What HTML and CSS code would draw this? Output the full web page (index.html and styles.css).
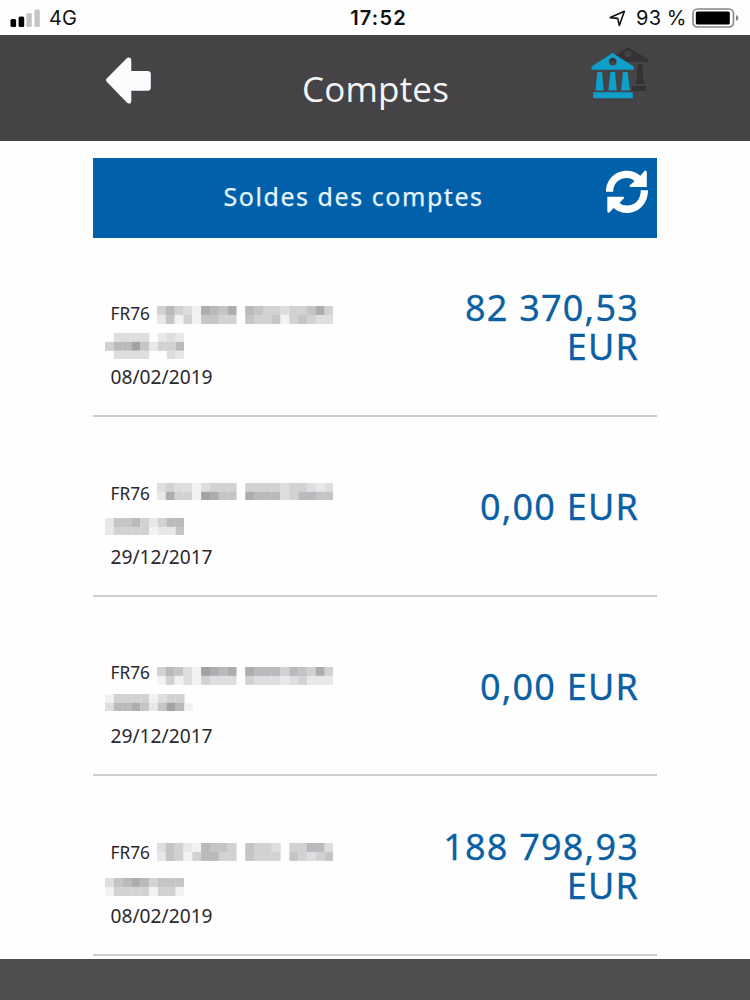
FILE: index.html
```html
<!DOCTYPE html>
<html lang="fr">
<head>
<meta charset="utf-8">
<title>Comptes</title>
<link rel="stylesheet" href="styles.css">
</head>
<body>
<div class="screen">
  <div class="status">
    <div class="status-left">
      <svg class="signal" width="30" height="18" viewBox="0 0 30 18"><rect x="0.5" y="10" width="5.6" height="8" rx="1.6" fill="#000"/><rect x="8.6" y="7.5" width="5.6" height="10.5" rx="1.6" fill="#000"/><rect x="16.4" y="4" width="5.4" height="14" rx="1.6" fill="#c5c4c6"/><rect x="24.4" y="0.5" width="5.4" height="17.5" rx="1.6" fill="#c5c4c6"/></svg>
      <span class="network">4G</span>
    </div>
    <span class="clock">17:52</span>
    <div class="status-right">
      <svg class="location" width="17" height="17" viewBox="0 0 17 17"><path d="M1.2 7.6 15.4 1.3 10.3 15.4 8.7 8.4Z" fill="none" stroke="#111" stroke-width="1.6" stroke-linejoin="round"/></svg>
      <span class="percent">93 %</span>
      <svg class="battery" width="47" height="20" viewBox="0 0 47 20"><rect x="1" y="1" width="40.5" height="18" rx="4.5" fill="#fff" stroke="#858585" stroke-width="1.6"/><rect x="3.8" y="3.6" width="34" height="13" rx="1.5" fill="#000"/><path d="M44 7Q46.5 8.2 46.5 10T44 13Z" fill="#858585"/></svg>
    </div>
  </div>
  <header class="header">
    <svg class="back" width="48" height="48" viewBox="0 0 48 48"><path d="M3 22.2 22.5 2.5Q24.5.7 26.7 2.3 27.3 3.2 27.3 5V15H43.5Q46.8 15 46.8 18V31.5Q46.8 34.8 43.5 34.8H27.3V44.5Q27.3 46.4 26.5 47.2 24.5 48 22.8 46.4L3 26Q1 24 3 22.2Z" fill="#fcfcff"/></svg>
    <h1 class="title">Comptes</h1>
    <svg class="bank" width="58" height="54" viewBox="0 0 58 54">
      <g fill="#343235"><path fill-rule="evenodd" d="M15 14 37 .5 57 12V15H33ZM37 3.4a3.6 3.6 0 1 0 .1 0Z"/><path d="M47 17H51L53 37H45ZM41 39H55V44H41Z"/></g>
      <g fill="#0e9fcb"><path fill-rule="evenodd" d="M.6 19.4 21.6 6 42.8 19.4V22.8H.6ZM21.7 10.8a3.9 3.9 0 1 0 .1 0Z"/><path d="M6.3 25H11L12.8 43.4H4.5ZM19.3 25H24L25.8 43.4H17.5ZM32 25H36.7L39 43.4H30.2ZM2.2 45.2H41.8V51.2H2.2Z"/></g>
    </svg>
  </header>
  <main class="content">
    <div class="banner">
      <h2 class="banner-title">Soldes des comptes</h2>
      <svg class="refresh" width="42" height="43" viewBox="0 0 42 43" fill="#fff"><path d="M0 21.8C0 9.8 8.9 .8 20.8 .8 26 .8 30.5 2.5 34.3 5.8L38.7 .8Q40.5-.2 40.8 2V17H24.4Q23 16.4 24 15.1L28.6 11.2Q25.4 8.1 20.8 8.1C13 8.1 7.2 13.6 7.2 21.8Z"/><path d="M42 20.2C42 33.4 32.7 43 21 43 15.9 43 11.5 41.3 7.7 38L3.4 42.5Q1.6 43.2 1.3 41.2V26.8H17.2Q18.8 27.4 17.7 28.6L13.4 32.9Q16.5 35.6 21 35.6C29 35.6 34.8 29.5 34.8 20.2Z"/></svg>
    </div>
    <ul class="accounts">
      <li class="account">
        <div class="details">
          <div class="line"><span class="iban">FR76</span><svg class="mosaic m8"></svg></div>
          <div class="line second"><svg class="mosaic m3"></svg></div>
          <div class="date">08/02/2019</div>
        </div>
        <div class="amount">82 370,53 EUR</div>
      </li>
      <li class="account">
        <div class="details">
          <div class="line"><span class="iban">FR76</span><svg class="mosaic m5"></svg></div>
          <div class="line second"><svg class="mosaic m9"></svg></div>
          <div class="date">29/12/2017</div>
        </div>
        <div class="amount">0,00 EUR</div>
      </li>
      <li class="account">
        <div class="details">
          <div class="line"><span class="iban">FR76</span><svg class="mosaic m10"></svg></div>
          <div class="line second"><svg class="mosaic m5"></svg></div>
          <div class="date">29/12/2017</div>
        </div>
        <div class="amount">0,00 EUR</div>
      </li>
      <li class="account">
        <div class="details">
          <div class="line"><span class="iban">FR76</span><svg class="mosaic m6"></svg></div>
          <div class="line second"><svg class="mosaic m10"></svg></div>
          <div class="date">08/02/2019</div>
        </div>
        <div class="amount">188 798,93 EUR</div>
      </li>
    </ul>
  </main>
  <footer class="footer"></footer>
</div>
<script src="mosaic.js"></script>
</body>
</html>
```
FILE: styles.css
```css
* { box-sizing: border-box; }
body { margin: 0; background: #fefefe; font-family: "Noto Sans", "Open Sans", sans-serif; }
.screen { width: 750px; height: 1000px; display: flex; flex-direction: column; overflow: hidden; }
.status { height: 35px; flex: none; display: grid; grid-template-columns: 1fr auto 1fr; align-items: center; padding: 0 11px 0 10px; font-family: Inter, "Liberation Sans", sans-serif; color: #111; line-height: 35px; }
.status-left { display: flex; align-items: center; gap: 9px; }
.signal { margin-bottom: 1px; }
.network { font-size: 20px; padding-top: 1px; }
.clock { font-size: 20px; font-weight: 600; letter-spacing: 1.2px; padding: 1px 0 0 8px; }
.status-right { display: flex; align-items: center; justify-content: flex-end; }
.location { margin-right: 10px; }
.percent { font-size: 20px; letter-spacing: 0.5px; word-spacing: -1px; margin-right: 5px; padding-top: 1px; }
.header { height: 106px; flex: none; background: #454346; display: grid; grid-template-columns: 1fr auto 1fr; align-items: start; padding: 0 103px 0 104px; }
.back { margin-top: 21px; }
.title { margin: 28px 0 0; font-weight: 400; font-size: 35px; line-height: 52px; letter-spacing: 0.2px; color: #f5f3f6; font-family: "Open Sans", "Noto Sans", sans-serif; }
.bank { margin: 12px -2px 0 0; justify-self: end; }
.content { flex: 1; min-height: 0; overflow: hidden; padding: 17px 93px 0; }
.banner { height: 79.5px; background: #0061aa; display: grid; grid-template-columns: 130.5px 1fr 51.5px; }
.banner-title { grid-column: 2; margin: 0; font-weight: 400; font-size: 25px; line-height: 76px; letter-spacing: 1.55px; color: #e6f5ff; white-space: nowrap; -webkit-text-stroke: 0.25px #e6f5ff; }
.refresh { margin-top: 12px; }
.accounts { list-style: none; margin: 0; padding: 0; }
.account { height: 179.6px; border-bottom: 2px solid #cfcdd0; display: flex; justify-content: space-between; padding: 60.5px 18px 0 17.5px; }
.details { color: #2c292e; }
.line { height: 31.5px; display: flex; align-items: flex-start; }
.iban { width: 46.5px; font-size: 17.3px; line-height: 32px; }
.second { margin-left: -6px; }
.date { font-size: 19.2px; line-height: 31px; }
.mosaic { display: block; flex: none; }
.m3 { margin-top: 3px; }
.m5 { margin-top: 5px; }
.m6 { margin-top: 6.5px; }
.m8 { margin-top: 8px; }
.m9 { margin-top: 8.5px; }
.m10 { margin-top: 10px; }
.amount { width: 200px; height: 78px; margin-top: -10px; display: flex; align-items: center; justify-content: flex-end; text-align: right; font-size: 36px; font-weight: 400; line-height: 39px; letter-spacing: 1.2px; color: #0b5fa3; -webkit-text-stroke: 0.3px #0b5fa3; }
.footer { flex: none; height: 41px; background: #514e52; }
```
FILE: mosaic.js
```js
// Grey levels of the masked account numbers, one digit per tile (0 is empty).
const masks = [
  ["46431765706544344574", "25141554405445145433"],
  ["033330232", "466852446", "033330032"],
  ["34331344404444344323", "27441875507666346655"],
  ["255642466", "244441225"],
  ["46531876707666465474", "14131433304333234222"],
  ["1444413440", "3667525861"],
  ["35421655405443044663", "25414664405444054345"],
  ["356764555", "144441441"]
];
const greys = ["none", "#f3f1f4", "#e9e7ea", "#dfdde0", "#d3d1d4", "#c6c4c7", "#bbb9bc", "#aeacaf", "#a3a1a4"];
const tileWidth = 8.82;
const tileHeight = 8.85;
document.querySelectorAll(".mosaic").forEach((svg, i) => {
  const rows = masks[i];
  svg.setAttribute("width", rows[0].length * tileWidth);
  svg.setAttribute("height", rows.length * tileHeight);
  rows.forEach((row, y) => [...row].forEach((level, x) => {
    const tile = document.createElementNS("http://www.w3.org/2000/svg", "rect");
    tile.setAttribute("x", x * tileWidth);
    tile.setAttribute("y", y * tileHeight);
    tile.setAttribute("width", tileWidth + 0.2);
    tile.setAttribute("height", tileHeight + 0.2);
    tile.setAttribute("fill", greys[level]);
    svg.appendChild(tile);
  }));
});
```
